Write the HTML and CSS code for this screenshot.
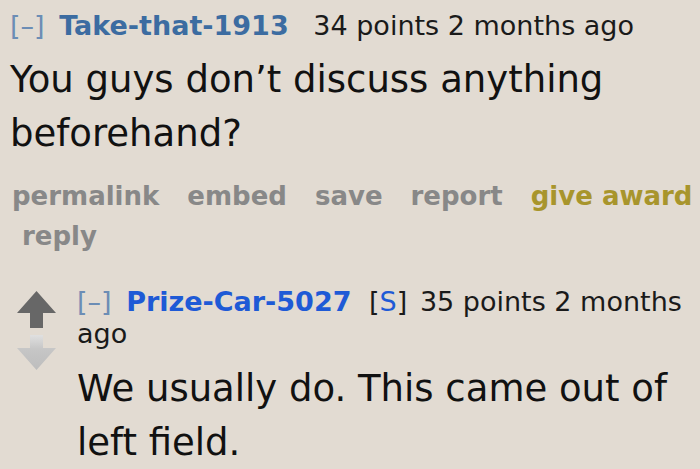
FILE: index.html
```html
<!DOCTYPE html>
<html>
<head>
<meta charset="utf-8">
<link rel="stylesheet" href="styles.css">
</head>
<body>
<div class="comment">
  <div class="tagline">
    <span class="expand">[–]</span>
    <span class="author">Take-that-1913</span>
    <span class="score">34 points</span> <span class="time">2 months ago</span>
  </div>
  <div class="md">You guys don’t discuss anything beforehand?</div>
  <ul class="buttons">
    <li>permalink</li>
    <li>embed</li>
    <li>save</li>
    <li>report</li>
    <li class="award">give award</li>
    <li>reply</li>
  </ul>
</div>
<div class="child">
  <div class="arrows">
    <svg class="arrow" width="40" height="37" viewBox="0 0 40 37">
      <path d="M19.5 0 L39 22 L26 22 L26 37 L13 37 L13 22 L0 22 Z" fill="#676767"/>
    </svg>
    <svg class="arrow" width="40" height="35" viewBox="0 0 40 35">
      <defs>
        <linearGradient id="dg" x1="0" y1="0" x2="0" y2="1">
          <stop offset="0" stop-color="#e0e0e0"/>
          <stop offset="0.4" stop-color="#c6c6c6"/>
          <stop offset="1" stop-color="#bdbdbd"/>
        </linearGradient>
      </defs>
      <path d="M13 0 L26 0 L26 13 L39 13 L19.5 35 L0 13 L13 13 Z" fill="url(#dg)"/>
    </svg>
  </div>
  <div class="entry">
    <div class="tagline tight">
      <span class="expand">[–]</span>
      <span class="author op">Prize-Car-5027</span>
      <span class="sub">[<span class="s">S</span>]</span>
      <span class="score">35 points</span> <span class="time">2 months</span>
      <span class="time">ago</span>
    </div>
    <div class="md md-child">We usually do. This came out of left field.</div>
  </div>
</div>
</body>
</html>
```
FILE: styles.css
```css
html, body {
  margin: 0;
  padding: 0;
  background: #e2dbd2;
}
body {
  font-family: "DejaVu Sans", Verdana, sans-serif;
  color: #111;
  width: 700px;
  height: 469px;
  overflow: hidden;
}
.comment {
  padding: 9px 0 0 10px;
}
.tagline {
  font-size: 27px;
  line-height: 34px;
  color: #1a1a1a;
}
.expand {
  color: #6c8db5;
  margin-right: 6px;
}
.author {
  font-weight: bold;
  color: #3c6ca1;
  margin-right: 16px;
}
.author.op {
  color: #1e5ad6;
  margin-right: 9px;
}
.sub {
  color: #1a1a1a;
  margin-right: 4px;
}
.s {
  color: #1e5ad6;
}
.md {
  font-size: 37px;
  line-height: 54px;
  color: #111;
  margin-top: 10px;
}
.buttons {
  list-style: none;
  margin: 15px 0 0 2px;
  padding: 0;
  display: flex;
  flex-wrap: wrap;
  column-gap: 18px;
  font-size: 26px;
  font-weight: bold;
  line-height: 40px;
  color: #888888;
}
.buttons li {
  padding-left: 10px;
}
.buttons li:first-child {
  padding-left: 0;
}
.buttons .award {
  color: #a8952c;
}
.child {
  display: flex;
  padding: 30px 4px 0 17px;
}
.arrows {
  display: flex;
  flex-direction: column;
  gap: 7px;
  width: 60px;
  flex-shrink: 0;
  padding-top: 5px;
}
.arrow {
  display: block;
}
.entry {
  flex: 1;
}
.tight {
  line-height: 32px;
}
.md-child {
  margin-top: 12px;
}
```
